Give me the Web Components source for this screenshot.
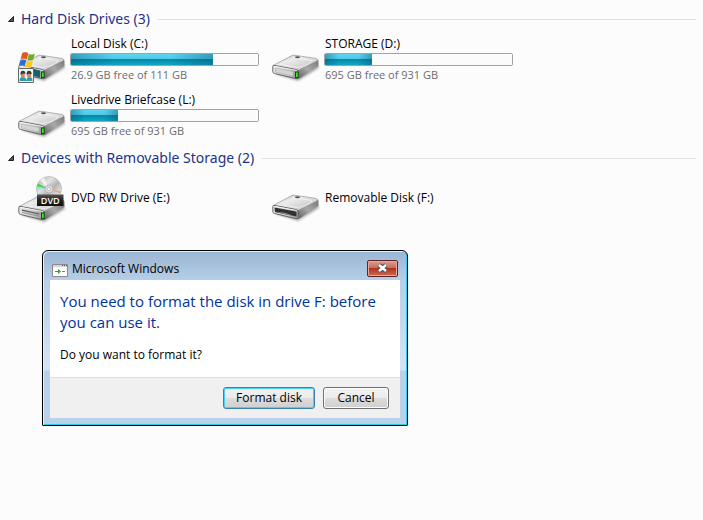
<!DOCTYPE html>
<html lang="en">
<head>
<meta charset="utf-8">
<title>Computer</title>
<style>
  body {
    margin: 0;
    background: #fcfcfc;
    color: #000;
    font: 12px/16px "Open Sans", "Noto Sans", sans-serif;
  }
</style>
</head>
<body>
<computer-view>
  <drive-group label="Hard Disk Drives (3)">
    <drive-item name="Local Disk (C:)" icon="system" used="76" space="26.9 GB free of 111 GB"></drive-item>
    <drive-item name="STORAGE (D:)" icon="disk" used="25" space="695 GB free of 931 GB"></drive-item>
    <drive-item name="Livedrive Briefcase (L:)" icon="disk" used="25" space="695 GB free of 931 GB"></drive-item>
  </drive-group>
  <drive-group label="Devices with Removable Storage (2)">
    <drive-item name="DVD RW Drive (E:)" icon="dvd"></drive-item>
    <drive-item name="Removable Disk (F:)" icon="removable"></drive-item>
  </drive-group>
  <message-dialog slot="dialog" label="Microsoft Windows">
    <span slot="title">You need to format the disk in drive F: before you can use it.</span>
    <span>Do you want to format it?</span>
    <dialog-button slot="actions" primary>Format disk</dialog-button>
    <dialog-button slot="actions">Cancel</dialog-button>
  </message-dialog>
</computer-view>

<script>
class ComputerView extends HTMLElement {
  constructor() {
    super();
    this.attachShadow({ mode: "open" }).innerHTML = `
      <style>
        :host { display: block; padding: 4px 7px 0; }
        .dialog { margin: 24px 35px 0; }
      </style>
      <main>
        <slot></slot>
        <div class="dialog"><slot name="dialog"></slot></div>
      </main>`;
  }
}

class DriveGroup extends HTMLElement {
  connectedCallback() {
    this.attachShadow({ mode: "open" }).innerHTML = `
      <style>
        :host { display: block; }
        h2 {
          display: flex;
          align-items: center;
          gap: 8px;
          margin: 0;
          padding-top: 3px;
          font-weight: normal;
        }
        h2::after { content: ""; flex: 1; height: 1px; background: #e2e2e2; }
        button {
          display: flex;
          align-items: center;
          gap: 7px;
          padding: 0 0 0 1px;
          border: 0;
          background: none;
          color: #1e3287;
          font: 14px/24px "Noto Sans", "Open Sans", sans-serif;
        }
        svg { width: 6px; height: 6px; }
        .items {
          display: grid;
          grid-template-columns: repeat(auto-fill, 254px);
          padding-left: 11px;
        }
      </style>
      <section>
        <h2><button type="button" aria-expanded="true">
          <svg viewBox="0 0 6 6"><path d="M5.500 .5v5H.5z" fill="#555" stroke="#222"/></svg>
          <span>${this.getAttribute("label")}</span>
        </button></h2>
        <div class="items"><slot></slot></div>
      </section>`;
  }
}

// shared gradients for every drive picture
const defs = `
  <defs>
    <linearGradient id="top" x1="0" y1="0" x2="1" y2="1">
      <stop offset="0" stop-color="#aaa"/><stop offset=".35" stop-color="#ececec"/>
      <stop offset=".7" stop-color="#d2d2d2"/><stop offset="1" stop-color="#f4f4f4"/>
    </linearGradient>
    <linearGradient id="front" x1="0" y1="0" x2="1" y2="0">
      <stop offset="0" stop-color="#e6e6e6"/><stop offset=".6" stop-color="#c4c4c4"/>
      <stop offset="1" stop-color="#8b8b8b"/>
    </linearGradient>
    <linearGradient id="side" x1="0" y1="1" x2="1" y2="0">
      <stop offset="0" stop-color="#5e5e5e"/><stop offset=".5" stop-color="#a8a8a8"/>
      <stop offset="1" stop-color="#777"/>
    </linearGradient>
    <linearGradient id="disc" x1="0" y1="0" x2="1" y2="1">
      <stop offset="0" stop-color="#b0b0b0"/><stop offset=".35" stop-color="#e4e4e4"/>
      <stop offset=".55" stop-color="#b4b4b4"/><stop offset=".8" stop-color="#e4e4e4"/>
      <stop offset="1" stop-color="#999"/>
    </linearGradient>
    <linearGradient id="plate" x1="0" y1="0" x2="0" y2="1">
      <stop offset="0" stop-color="#555"/><stop offset=".5" stop-color="#222"/>
      <stop offset="1" stop-color="#111"/>
    </linearGradient>
    <filter id="soft"><feGaussianBlur stdDeviation="1"/></filter>
  </defs>`;

const box = `
  <path d="M3 39 26 46 47 33 45 28z" fill="#000" opacity=".3" filter="url(#soft)"/>
  <path d="M26 34 45 24.500Q46.500 24 46.500 26V31L27.500 43.500 25 44z" fill="url(#side)"/>
  <path d="M1 30.500 20 20.500Q21 20 23 20.300L44.500 23.500Q46.500 24.500 45 26L27 35 25 35.500 2 31.500z" fill="url(#top)" stroke="#888" stroke-width=".6"/>
  <path d="M.8 31.500Q1 30 3 30.500L24 34.500Q26.500 35 26.500 37V42.500Q26 44 24 43.700L2.500 38.500Q.8 38 .8 36.500z" fill="url(#front)" stroke="#5a5a5a" stroke-width=".9"/>
  <path d="M2.500 31.300 25 35.500" stroke="#fff" stroke-width=".8"/>
  <path d="M20 22.500 40 25.500Q37 31 25 32.500L11 30" fill="none" stroke="#fff" stroke-width=".7" opacity=".7"/>`;

const led = `<path d="M23 36.500h3.500v6.500H23z" fill="#174717"/><path d="M24 37.500h1.700v4.500H24z" fill="#36ee25"/>`;
const cap = `<ellipse cx="25.500" cy="22.300" rx="2.500" ry="1" fill="#555"/>`;

const icons = {
  disk: `${box}${cap}${led}
    <path d="M3.500 33 21 36.500V41L3.500 37z" fill="#d3d4d9" stroke="#aaa" stroke-width=".5"/>`,
  system: `${box}${cap}
    <path d="M12 33 22 35.500V42.500L12 40z" fill="#17636b"/>${led}
    <g stroke="#fff" stroke-width=".2">
      <path d="M4 18Q7.500 16 10.500 18.500L8.800 24.700Q6 23 2.500 24.400z" fill="#e2561f"/>
      <path d="M10.800 18.800Q13.500 20.300 17 18.500L15.300 25Q12.500 26.500 9.200 24.900z" fill="#6fab25"/>
      <path d="M2.300 25Q5.800 23.500 8.500 25.300L6.800 31.300Q4 29.500.5 31z" fill="#2c6fd0"/>
      <path d="M9 25.500Q12 27.200 15.200 25.700L13.500 31.800Q10.500 33.200 7.200 31.600z" fill="#fac51d"/>
    </g>
    <path d="M.5 33.500h15v14H.5z" fill="#eef8fb" stroke="#666"/>
    <path d="M1.500 46q0-4 3.300-4t3.700 4zM8.500 46q0-4 3-4t3 4z" fill="#2d9ab0"/>
    <path d="M3 38h3.700v4q-2 2-3.700 0zM9.200 38H13v4q-2 2-3.800 0z" fill="#c98c60"/>
    <path d="M2.500 40q-.5-4 2.200-4.200t2.800 3q-3-.8-5 1.200zM8.700 40q-.5-4 2.200-4.200t2.800 3.500q-3-1.300-5 .7z" fill="#343c3a"/>`,
  dvd: `<g transform="translate(0 2)">${box}${led}
      <path d="M4 34.200 21 38" stroke="#555" stroke-width="1.200"/><path d="M4 36.300 21 40.200" stroke="#777" stroke-width=".7"/>
    </g>
    <circle cx="31" cy="15" r="12.500" fill="url(#disc)" stroke="#aaa" stroke-width=".6"/>
    <path d="M31 15 20 9.500 18.900 12.500z" fill="#45d53c"/><path d="M31 15 18.800 13 18.800 16z" fill="#a5dfe6"/>
    <path d="M31 15 43 17.500 42 19.500z" fill="#dfa983"/><path d="M31 15 22 6 26 3.500z" fill="#fff" opacity=".7"/>
    <circle cx="31" cy="15" r="4" fill="#ddd" stroke="#aaa" stroke-width=".7"/>
    <circle cx="31" cy="15" r="1.600" fill="#fafafa" stroke="#999" stroke-width=".5"/>
    <path d="M19 20.500h26.500v11.500H19z" fill="url(#plate)"/>
    <text x="32.200" y="29.500" text-anchor="middle" font-size="9" font-family="Open Sans" font-weight="600" fill="#fff">DVD</text>`,
  removable: `<g transform="translate(0 1)">${box}${cap}
      <path d="M2.500 32.500 23.500 36.500Q24.500 37 24.500 38.500V41.500L3 37Z" fill="#303030"/>
      <path d="M5 37.500Q13 36 21 41z" fill="#858585"/>
    </g>`
};

class DriveItem extends HTMLElement {
  connectedCallback() {
    const name = this.getAttribute("name");
    const used = this.getAttribute("used");
    this.attachShadow({ mode: "open" }).innerHTML = `
      <style>
        :host {
          display: grid;
          grid-template-columns: 48px 1fr;
          align-items: center;
          gap: 4px;
          height: 56px;
          padding-right: 13px;
        }
        svg { display: block; width: 48px; height: 48px; overflow: visible; }
        .name, .space { padding-left: 1px; }
        .space { color: #6d6d6d; font-size: 11px; }
        progress {
          display: block;
          box-sizing: border-box;
          width: 100%;
          height: 13px;
          margin: 1px 0;
          border: 1px solid #a2a2a2;
          border-radius: 2px;
          overflow: hidden;
          appearance: none;
        }
        progress::-webkit-progress-bar { background: #fbfbfb; }
        progress::-webkit-progress-value {
          background:
            linear-gradient(90deg, #00506e66, #00c8f000 30%, #00c8f000 70%, #00506e66),
            linear-gradient(#5fd3ee, #4cc8e6 50%, #0689a8 50%, #12a6c6);
        }
      </style>
      <svg viewBox="0 0 48 48" aria-hidden="true">${defs}${icons[this.getAttribute("icon")]}</svg>
      <div>
        <div class="name">${name}</div>
        ${used ? `<progress max="100" value="${used}" aria-label="${name}"></progress>
        <div class="space">${this.getAttribute("space")}</div>` : ""}
      </div>`;
  }
}

class MessageDialog extends HTMLElement {
  connectedCallback() {
    this.attachShadow({ mode: "open" }).innerHTML = `
      <style>
        :host { display: block; max-width: 366px; }
        .frame {
          padding: 1px 7px 7px;
          border: 1px solid #000;
          border-radius: 6px 6px 1px 1px;
          box-shadow: inset 1px 1px #e4f0fa, inset -1px -1px #29cfe8;
          background: linear-gradient(#9ab5d3, #b7cfe8 30px, #c0d6ee 60px, #d5e4f5 119px, #b9d1ea 120px);
        }
        header { display: flex; align-items: center; gap: 4px; height: 28px; padding: 0 2px; }
        header svg { width: 16px; height: 13px; margin-top: 8px; }
        .label { flex: 1; margin-top: 6px; }
        .close {
          display: grid;
          place-items: center;
          width: 31px;
          height: 17px;
          margin-top: 4px;
          padding: 0;
          border: 1px solid #5b2526;
          border-radius: 2px;
          box-shadow: inset 0 0 0 1px #eaa99c;
          background: linear-gradient(#dc9c90, #ca6d5e 45%, #b2331c 50%, #cf6a50);
        }
        .close svg { width: 13px; height: 10px; margin: 0; }
        .body { padding: 11px 10px 14px; background: #fff; }
        h1 { margin: 0 0 14px; color: #003399; font-size: 15px; line-height: 21px; font-weight: normal; }
        footer {
          display: flex;
          justify-content: flex-end;
          gap: 8px;
          padding: 9px 11px;
          border-top: 1px solid #dfdfdf;
          background: #f0f0f0;
        }
      </style>
      <div class="frame" role="dialog" aria-labelledby="label">
        <header>
          <svg viewBox="0 0 16 13" aria-hidden="true">
            <path d="M.5.500h15v12H.5z" fill="#fff" stroke="#8b8b8b"/>
            <path d="M1 1h14v2H1z" fill="#d3d3d3"/><path d="M10 1h1v1h-1zM12 1h1v1h-1zM14 1h1v1h-1z" fill="#555"/>
            <path d="M3 7h3V5l3 2.500L6 10V8H3z" fill="#31a52b"/><path d="M10 7.500h3" stroke="#777"/>
          </svg>
          <span class="label" id="label">${this.getAttribute("label")}</span>
          <button class="close" type="button" aria-label="Close">
            <svg viewBox="0 0 13 10"><path d="M3 2 10 8M10 2 3 8" stroke="#4a4a5a" stroke-width="4.600"/><path d="M3 2 10 8M10 2 3 8" stroke="#fff" stroke-width="2.500"/></svg>
          </button>
        </header>
        <div class="body">
          <h1><slot name="title"></slot></h1>
          <slot></slot>
        </div>
        <footer><slot name="actions"></slot></footer>
      </div>`;
  }
}

class DialogButton extends HTMLElement {
  connectedCallback() {
    this.attachShadow({ mode: "open" }).innerHTML = `
      <style>
        :host { display: block; }
        button {
          display: block;
          min-width: 66px;
          height: 22px;
          padding: 0 12px;
          border: 1px solid #707070;
          border-radius: 3px;
          box-shadow: inset 0 0 0 1px #fcfcfc;
          background: linear-gradient(#f2f2f2, #ebebeb 50%, #dddddd 50%, #cfcfcf);
          color: #000;
          font: inherit;
        }
        :host([primary]) button { border-color: #3c7fb1; box-shadow: inset 0 0 0 1px #48d2f8; }
      </style>
      <button type="button"><slot></slot></button>`;
  }
}

customElements.define("computer-view", ComputerView);
customElements.define("drive-group", DriveGroup);
customElements.define("drive-item", DriveItem);
customElements.define("message-dialog", MessageDialog);
customElements.define("dialog-button", DialogButton);
</script>
</body>
</html>
